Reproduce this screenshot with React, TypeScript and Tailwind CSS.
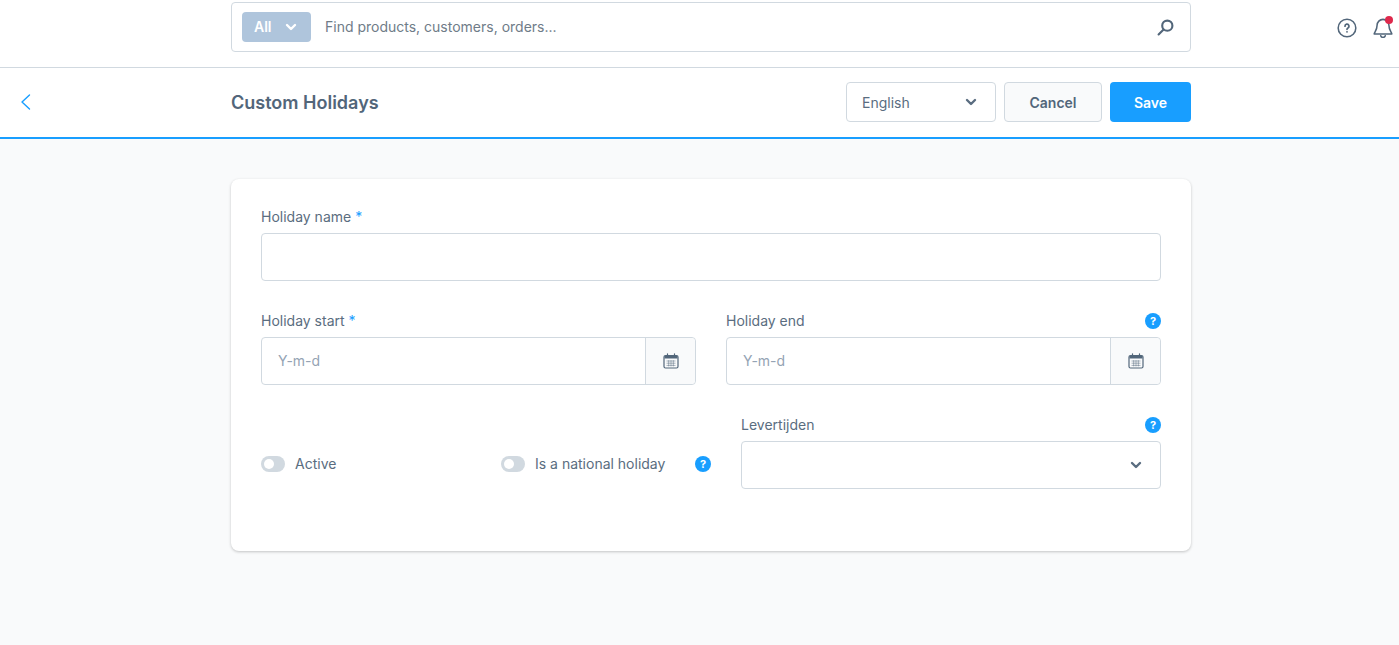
import React from "react";

const Help = () => (
  <span className="flex h-4 w-4 shrink-0 items-center justify-center rounded-full bg-[#189eff] text-[11px] font-bold leading-none text-white">?</span>
);

const Chevron = ({ cls }: { cls: string }) => (
  <svg viewBox="0 0 12 12" className={cls} fill="none" stroke="currentColor" strokeWidth="2.4" strokeLinecap="round" strokeLinejoin="round">
    <path d="M2 4l4 4 4-4" />
  </svg>
);

const Calendar = () => (
  <svg viewBox="0 0 16 16" className="h-4 w-4 text-[#52667a]" fill="none" stroke="currentColor" strokeWidth="1.2">
    <rect x="1" y="2.5" width="14" height="12.5" rx="1.5" />
    <path d="M1.5 3h13v2.5h-13z" fill="currentColor" stroke="none" />
    <path d="M4.5 .8v2.5M11.5 .8v2.5" strokeLinecap="round" />
    <path d="M3.5 8h9M3.5 10.2h9M3.5 12.4h9M5.7 7.2v6.2M8 7.2v6.2M10.3 7.2v6.2" strokeWidth="0.7" opacity="0.7" />
  </svg>
);

const Toggle = () => (
  <span className="relative block h-4 w-6 rounded-full bg-[#d1d9e0]">
    <span className="absolute left-[3px] top-[3px] h-2.5 w-2.5 rounded-full bg-white" />
  </span>
);

const DateField = ({ label, req, help }: { label: string; req?: boolean; help?: boolean }) => (
  <div className="flex-1">
    <div className="mb-2 flex h-4 items-center justify-between">
      <span className="text-sm leading-4 text-[#5a6d80]">
        {label}
        {req && <span className="text-[#189eff]"> *</span>}
      </span>
      {help && <Help />}
    </div>
    <div className="flex h-12 rounded border border-[#d1d9e0] bg-white">
      <span className="flex-1 px-4 text-sm leading-[46px] text-[#94a3b4]">Y-m-d</span>
      <span className="flex w-[50px] items-center justify-center rounded-r border-l border-[#d1d9e0] bg-[#f9fafb]">
        <Calendar />
      </span>
    </div>
  </div>
);

export default function App() {
  return (
    <div className="flex h-[645px] flex-col overflow-hidden bg-[#f9fafb] font-['Inter',sans-serif] text-[#5a6d80] antialiased">
      <header className="flex h-[68px] shrink-0 border-b border-[#d1d9e0] bg-white">
        <div className="ml-[231px] mt-0.5 flex h-[50px] w-[960px] items-center rounded border border-[#d1d9e0] pl-2.5 pr-4">
          <span className="flex h-[30px] w-[69px] items-center justify-between rounded bg-[#afc5dc] pl-3 pr-[14px] text-sm font-semibold text-white">
            All
            <Chevron cls="h-3 w-3" />
          </span>
          <span className="ml-[14px] flex-1 text-sm text-[#6f7c88]">Find products, customers, orders...</span>
          <svg viewBox="0 0 16 16" className="h-[17px] w-[17px] text-[#52667a]" fill="none" stroke="currentColor" strokeWidth="2" strokeLinecap="round">
            <circle cx="9.7" cy="6.3" r="4.8" />
            <path d="M6.2 9.8L1.5 14.5" />
          </svg>
        </div>
        <div className="ml-[146px] mt-[18px] flex h-5 items-start gap-4">
          <svg viewBox="0 0 22 22" className="h-5 w-5 text-[#52667a]" fill="none" stroke="currentColor" strokeWidth="1.7" strokeLinecap="round">
            <circle cx="11" cy="11" r="9.7" />
            <path d="M8.8 9a2.2 2.2 0 1 1 3.3 1.9c-.7.4-1.1.8-1.1 1.6" strokeWidth="1.9" />
            <circle cx="11" cy="15.2" r="1" fill="currentColor" stroke="none" />
          </svg>
          <span className="relative block h-5 w-5">
            <svg viewBox="0 0 22 22" className="h-5 w-5 text-[#52667a]" fill="none" stroke="currentColor" strokeWidth="1.7" strokeLinecap="round" strokeLinejoin="round">
              <path d="M11 1.5a6.5 6.5 0 0 0-6.5 6.5c0 5.5-3.2 8-3.2 9.5h19.4c0-1.5-3.2-4-3.2-9.5A6.5 6.5 0 0 0 11 1.5z" />
              <path d="M8.5 19.5a2.6 2.6 0 0 0 5 0" />
            </svg>
            <span className="absolute -top-0.5 right-0 h-2 w-2 rounded-full bg-[#de294c]" />
          </span>
        </div>
      </header>

      <div className="flex h-[71px] shrink-0 items-center border-b-2 border-[#189eff] bg-white pb-px">
        <svg viewBox="0 0 12 18" className="ml-5 h-[18px] w-3 text-[#189eff]" fill="none" stroke="currentColor" strokeWidth="1.4" strokeLinecap="round" strokeLinejoin="round">
          <path d="M9.5 2L2 9l7.5 7" />
        </svg>
        <h1 className="ml-[199px] mt-px w-[615px] text-lg font-semibold text-[#52667a]">Custom Holidays</h1>
        <div className="flex h-10 w-[150px] items-center justify-between rounded border border-[#d1d9e0] pl-[15px] pr-[18px] text-sm">
          <span className="mt-px">English</span>
          <Chevron cls="h-3 w-3" />
        </div>
        <button className="ml-2 h-10 w-[98px] rounded border border-[#d1d9e0] bg-[#f9fafb] pt-px text-sm font-semibold text-[#52667a]">Cancel</button>
        <button className="ml-2 h-10 w-[81px] rounded bg-[#189eff] pt-px text-sm font-semibold text-white">Save</button>
      </div>

      <main className="ml-[231px] mt-10 w-[960px] rounded-lg bg-white p-[30px] pb-[62px] shadow-[0_1px_3px_rgba(0,0,0,0.22)]">
        <div className="mb-2 text-sm leading-4 text-[#5a6d80]">
          Holiday name<span className="text-[#189eff]"> *</span>
        </div>
        <div className="h-12 rounded border border-[#d1d9e0]" />
        <div className="mt-8 flex gap-[30px]">
          <DateField label="Holiday start" req />
          <DateField label="Holiday end" help />
        </div>
        <div className="mt-8 flex">
          <div className="flex items-center pt-[22px]">
            <Toggle />
            <span className="ml-2.5 w-[206px] text-sm">Active</span>
            <Toggle />
            <span className="ml-2.5 w-[160px] text-sm">Is a national holiday</span>
            <Help />
          </div>
          <div className="ml-[30px] flex-1">
            <div className="mb-2 flex h-4 items-center justify-between">
              <span className="text-sm leading-4">Levertijden</span>
              <Help />
            </div>
            <div className="flex h-12 items-center justify-end rounded border border-[#d1d9e0] pr-[18px]">
              <Chevron cls="h-3 w-3" />
            </div>
          </div>
        </div>
      </main>
    </div>
  );
}
